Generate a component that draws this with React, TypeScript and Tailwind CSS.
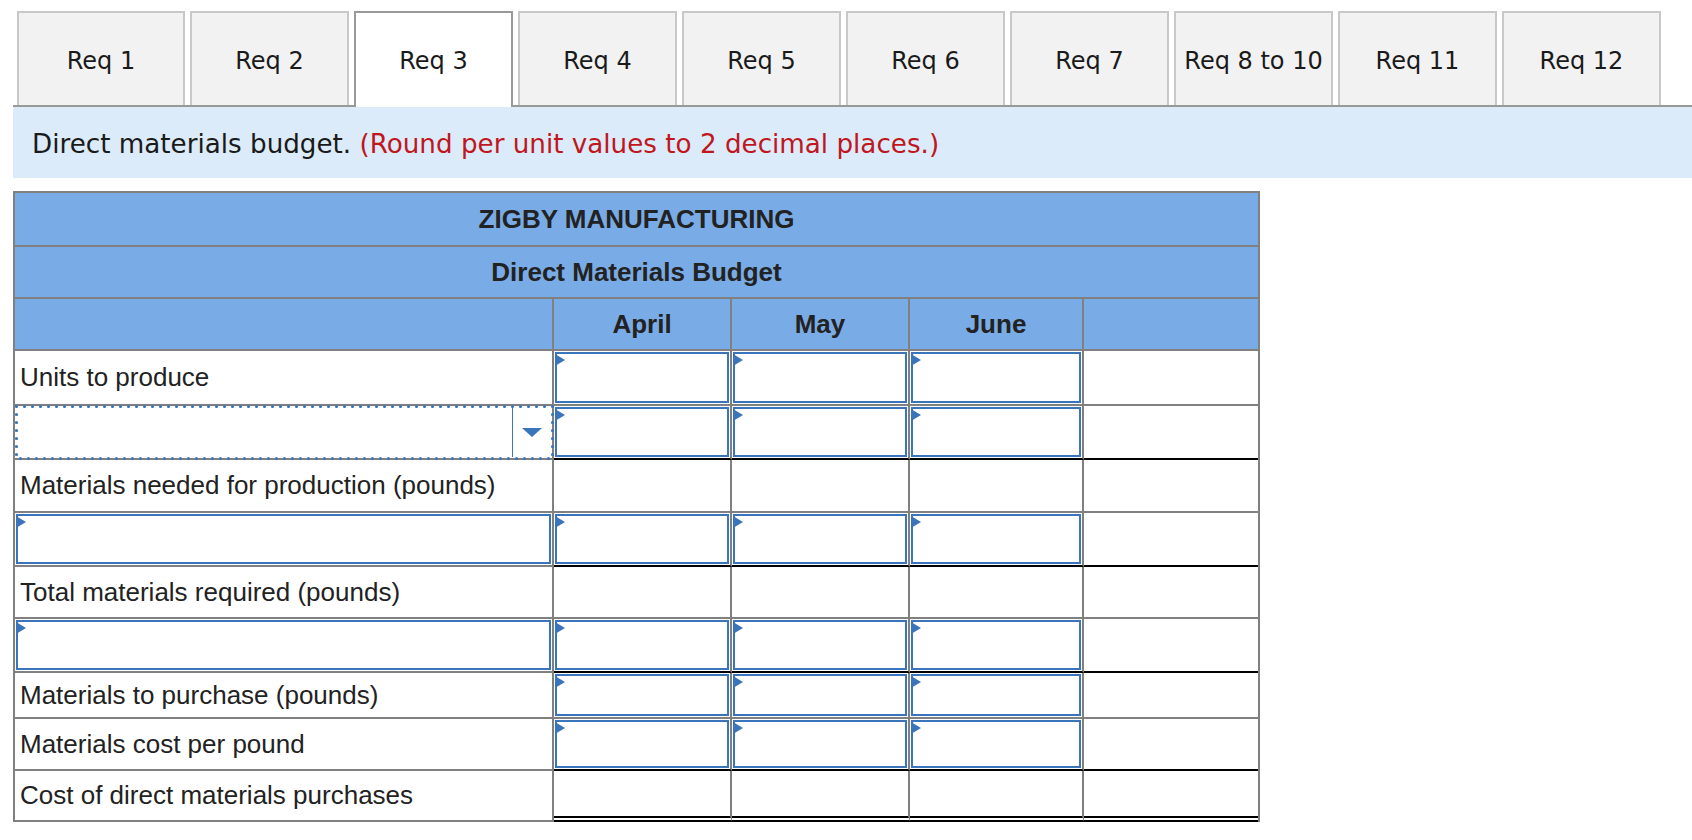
import React from "react";

const tabs = [
  "Req 1",
  "Req 2",
  "Req 3",
  "Req 4",
  "Req 5",
  "Req 6",
  "Req 7",
  "Req 8 to 10",
  "Req 11",
  "Req 12",
];

type Row = {
  label?: string;
  kind: "text" | "input" | "select";
  inputs: boolean;
  bottom: "gray" | "black" | "double";
  height: string;
};

const rows: Row[] = [
  { label: "Units to produce", kind: "text", inputs: true, bottom: "gray", height: "h-[55px]" },
  { kind: "select", inputs: true, bottom: "black", height: "h-[54px]" },
  { label: "Materials needed for production (pounds)", kind: "text", inputs: false, bottom: "gray", height: "h-[53px]" },
  { kind: "input", inputs: true, bottom: "black", height: "h-[54px]" },
  { label: "Total materials required (pounds)", kind: "text", inputs: false, bottom: "gray", height: "h-[52px]" },
  { kind: "input", inputs: true, bottom: "black", height: "h-[54px]" },
  { label: "Materials to purchase (pounds)", kind: "text", inputs: true, bottom: "gray", height: "h-[46px]" },
  { label: "Materials cost per pound", kind: "text", inputs: true, bottom: "black", height: "h-[52px]" },
  { label: "Cost of direct materials purchases", kind: "text", inputs: false, bottom: "double", height: "h-[51px]" },
];

const cols = "grid grid-cols-[539px_178px_178px_174px_174px]";

function InputBox() {
  return (
    <div className="h-full p-px">
      <div className="relative h-full border-2 border-[#3a74ba] bg-white">
        <span className="absolute left-[-2px] top-0 h-0 w-0 border-y-[6px] border-l-[10px] border-y-transparent border-l-[#3a74ba]" />
      </div>
    </div>
  );
}

function SelectBox() {
  return (
    <div className="relative h-full">
      <div className="absolute right-[39px] top-[2px] bottom-[1px] w-[1.5px] bg-[#3a74ba]" />
      <span className="absolute right-[10px] top-[22px] h-0 w-0 border-x-[10px] border-t-[9px] border-x-transparent border-t-[#3a74ba]" />
      <svg
        className="pointer-events-none absolute left-0 top-[-1px] overflow-visible"
        width="539"
        height="55"
      >
        <rect
          x="1.5"
          y="1.5"
          width="536"
          height="52"
          fill="none"
          stroke="#3a74ba"
          strokeWidth="3.2"
          strokeLinecap="round"
          strokeDasharray="0 8"
        />
      </svg>
    </div>
  );
}

function bottomClass(b: Row["bottom"]) {
  if (b === "black") return "border-b-2 border-b-black";
  if (b === "double") return "border-b-[6px] [border-bottom-style:double] border-b-black";
  return "border-b-2 border-b-[#808080]";
}

function App() {
  return (
    <div className="h-[840px] w-[1692px] overflow-hidden bg-white">
      <div className="pl-[13px] pt-[11px] font-['DejaVu_Sans',Verdana,sans-serif] text-[24px] text-[#1a1a1a]">
        <div className="flex items-end gap-[5px] border-b-2 border-[#999]">
          {tabs.map((t, i) =>
            i === 2 ? (
              <div
                key={t}
                className="relative z-10 -mb-[2px] flex h-[96px] w-[159px] items-center justify-center border-2 border-b-0 border-[#999] bg-white pt-[2px]"
              >
                {t}
              </div>
            ) : (
              <div
                key={t}
                className={`flex h-[94px] items-center justify-center border-2 border-b-0 border-[#c8c8c8] bg-[#f2f2f2] pt-[4px] ${
                  i === 0 ? "ml-[4px] w-[168px]" : "w-[159px]"
                }`}
              >
                {t}
              </div>
            )
          )}
        </div>
      </div>

      <div className="ml-[13px] flex h-[71px] items-center bg-[#dbebf9] pl-[19px] pt-[4px] font-['DejaVu_Sans',Verdana,sans-serif] text-[26.2px] text-[#1a1a1a]">
        <span>
          Direct materials budget.{" "}
          <span className="text-[#c0161d]">(Round per unit values to 2 decimal places.)</span>
        </span>
      </div>

      <div className="ml-[13px] mt-[13px] w-[1247px] border-x-2 border-t-2 border-[#808080] font-['Liberation_Sans',Arial,sans-serif] text-[26px] text-[#222]">
        <div className="flex h-[54px] items-center justify-center border-b-2 border-[#808080] bg-[#79ace6] font-bold">
          ZIGBY MANUFACTURING
        </div>
        <div className="flex h-[52px] items-center justify-center border-b-2 border-[#808080] bg-[#79ace6] font-bold">
          Direct Materials Budget
        </div>
        <div className={`${cols} h-[52px] bg-[#79ace6] font-bold`}>
          <div className="border-b-2 border-r-2 border-[#808080]" />
          <div className="flex items-center justify-center border-b-2 border-r-2 border-[#808080]">April</div>
          <div className="flex items-center justify-center border-b-2 border-r-2 border-[#808080]">May</div>
          <div className="flex items-center justify-center border-b-2 border-r-2 border-[#808080]">June</div>
          <div className="border-b-2 border-[#808080]" />
        </div>

        {rows.map((r, idx) => (
          <div key={idx} className={`${cols} ${r.height}`}>
            <div className="relative flex items-center border-b-2 border-r-2 border-[#808080]">
              {r.kind === "text" && <span className="pl-[5px]">{r.label}</span>}
              {r.kind === "input" && (
                <div className="h-full w-full">
                  <InputBox />
                </div>
              )}
              {r.kind === "select" && (
                <div className="h-full w-full">
                  <SelectBox />
                </div>
              )}
            </div>
            {[0, 1, 2].map((c) => (
              <div key={c} className={`border-r-2 border-r-[#808080] ${bottomClass(r.bottom)}`}>
                {r.inputs && <InputBox />}
              </div>
            ))}
            <div className={bottomClass(r.bottom)} />
          </div>
        ))}
      </div>
    </div>
  );
}

export default App;
